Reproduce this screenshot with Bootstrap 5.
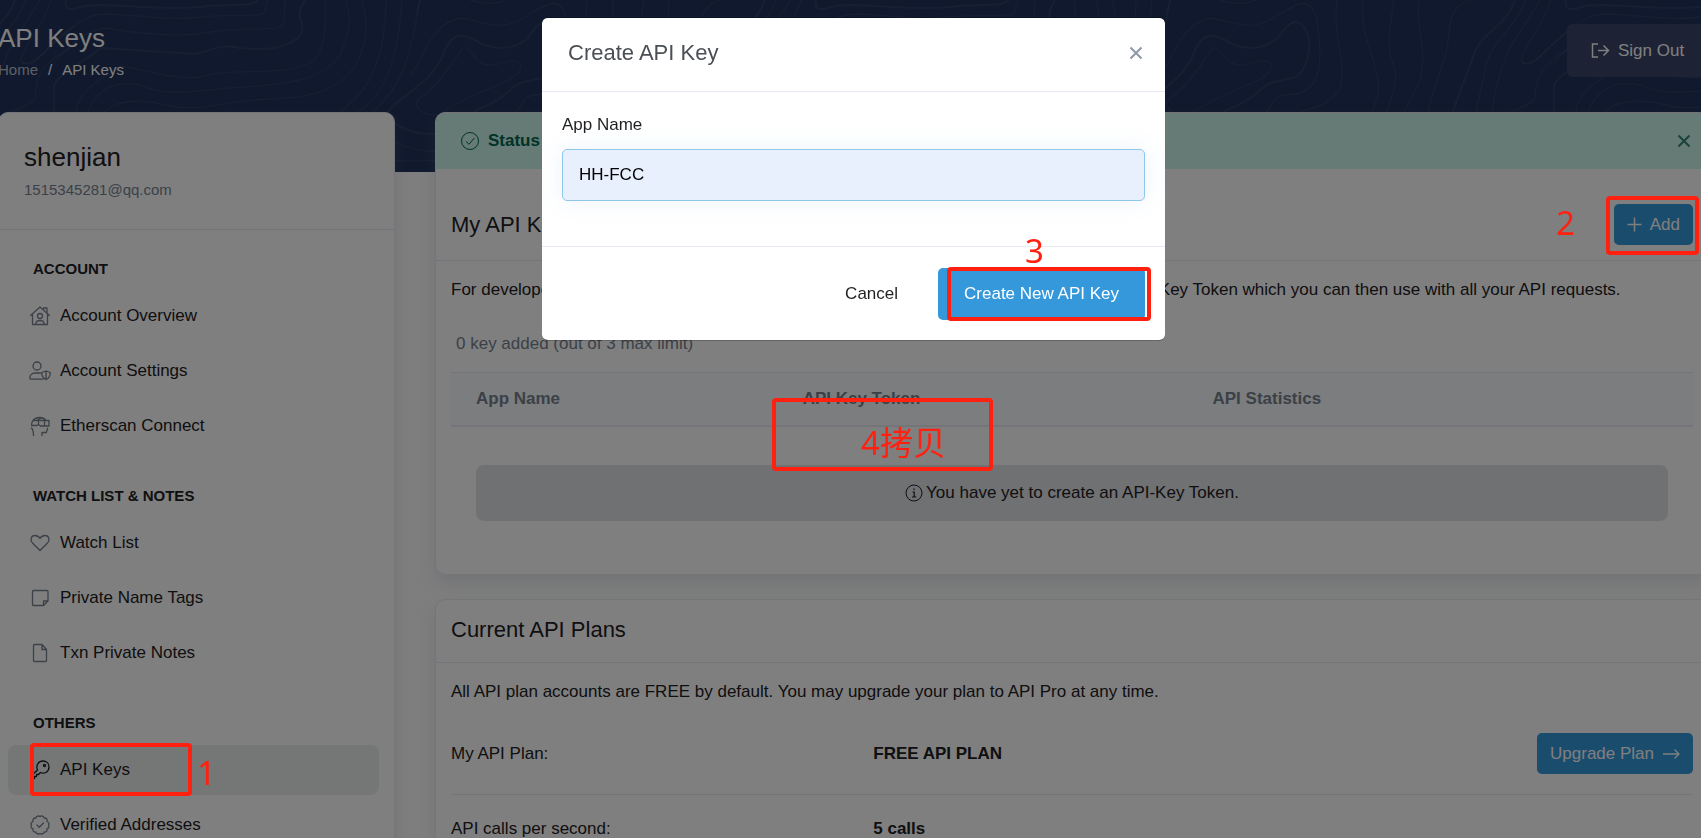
<!DOCTYPE html>
<html lang="en">
<head>
<meta charset="utf-8">
<meta name="viewport" content="width=device-width, initial-scale=1">
<title>API Keys</title>
<link href="https://cdn.jsdelivr.net/npm/bootstrap@5.3.0/dist/css/bootstrap.min.css" rel="stylesheet">
<style>
  :root { --line: #e7eaf3; --brand: #3498db; --ink: #1e2022; --muted: #77838f; --mark: #ff2010; }
  body { font-family: "Liberation Sans", Arial, sans-serif; font-size: 17px; line-height: 26px; color: var(--ink); background: #fcfcfd; }
  .btn { font-size: 17px; line-height: 26px; border-radius: 5px; }
  .btn-brand { background: var(--brand); color: #fff; border: 0; }
  .page-shell { margin: 0 -8px 0 -2px; }
  .hero { height: 172px; background: #21325b; }
  .topbar { padding: 24px 0 31px; }
  .topbar h1 { font-size: 26px; line-height: 28px; margin: 0 0 7px; color: #fff; font-weight: 400; }
  .crumbs { --bs-breadcrumb-item-padding-x: 10px; font-size: 15px; line-height: 22px; color: #fff; }
  .crumbs .breadcrumb-item, .crumbs .breadcrumb-item::before { color: #fff; }
  .crumbs a { color: rgba(255,255,255,.7); text-decoration: none; }
  .btn-signout { background: #3a4468; color: #fff; border: 0; width: 142px; height: 53px; padding: 0 23px; white-space: nowrap; }
  .panel { border: 1px solid var(--line); border-radius: 10px; background: #fff; box-shadow: 0 8px 16px rgba(140,152,164,.2); }
  .side { width: 397px; flex: none; }
  .side-head { padding: 28px 25px; border-bottom: 1px solid var(--line); }
  .side-head h2 { font-size: 26px; line-height: 32px; font-weight: 400; margin: 0 0 6px; }
  .side-head p { font-size: 15px; line-height: 22px; color: var(--muted); margin: 0; }
  .side-nav { padding: 29px 15px 40px 9px; }
  .side-nav h3 { font-size: 15px; line-height: 20px; font-weight: 700; margin: 0 0 12px 25px; text-transform: uppercase; }
  .side-nav ul { gap: 5px; margin-bottom: 35px; }
  .side-nav a { height: 50px; padding: 0 21px; gap: 9px; border-radius: 8px; color: var(--ink); text-decoration: none; }
  .side-nav a.active { background: #ebefee; }
  .side-nav svg { color: var(--muted); }
  .side-nav a.active svg { color: var(--ink); }
  .ico { width: 22px; height: 22px; flex: none; fill: none; stroke: currentColor; stroke-width: 1.3; stroke-linecap: round; stroke-linejoin: round; }
  .main-col { min-width: 0; margin-left: 40px; }
  .status-bar { height: 56px; padding: 0 16px 0 24px; background: #ccf4ed; color: #00694f; border-radius: 9px 9px 0 0; }
  .panel-title { font-size: 22px; line-height: 28px; font-weight: 400; margin: 0; }
  .panel-head { padding: 16px 15px 18px; border-bottom: 1px solid var(--line); }
  .panel-head-tall { padding: 35px 15px 15px; border-bottom: 1px solid var(--line); }
  .panel-body { padding: 16px 15px 15px; }
  .intro { margin-bottom: 28px; }
  .quota { color: var(--muted); padding-left: 5px; }
  .btn-slim { height: 41px; padding: 0 13px; }
  .keys { margin: 15px 0 0; color: var(--ink); }
  .keys th { background: #f8fafd; color: var(--muted); padding: 13px 25px; border-top: 1px solid var(--line); border-bottom: 2px solid var(--line); }
  .keys td { padding: 38px 25px; border: 0; }
  .keys th:nth-child(1) { width: 26.3%; }
  .keys th:nth-child(2) { width: 33%; }
  .empty-note { height: 56px; gap: 3px; background: #dfe2e5; border-radius: 8px; }
  .plan-row { padding-bottom: 20px; margin-bottom: 21px; border-bottom: 1px solid var(--line); }
  .plan-label { width: 34%; }
  .key-modal { z-index: 30; left: -2px; right: -8px; width: auto; overflow: hidden; }
  .key-modal .modal-dialog { max-width: 623px; margin: 17px auto; }
  .key-modal .modal-content { border: 1px solid rgba(0,0,0,.2); border-width: 1px 0; border-radius: 6px; color: var(--ink); background-clip: padding-box; }
  .key-modal .modal-header { padding: 0 21px 3px 26px; height: 74px; border-bottom: 1px solid var(--line); }
  .key-modal .modal-title { font-size: 22px; line-height: 28px; font-weight: 400; color: #4a4f55; }
  .key-modal .modal-body { padding: 20px 20px 45px; }
  .key-modal label { margin-bottom: 11px; }
  .key-modal .form-control { height: 52px; font-size: 17px; padding: 0 16px; border: 1px solid #8ec7ea; border-radius: 5px; background: #e8f0fe; color: #000; box-shadow: 0 0 25px rgba(52,152,219,.1); }
  .key-modal .modal-footer { padding: 21px 20px 20px; border-top: 1px solid var(--line); }
  .key-modal .modal-footer .btn { height: 52px; margin: 0; padding: 0 26px; }
  .key-modal .modal-footer .btn-cancel { margin-right: 14px; border: 0; color: var(--ink); }
  .x-btn { border: 0; background: none; padding: 0; width: 16px; height: 16px; display: flex; color: #8c98a4; }
  .x-btn svg { width: 16px; height: 16px; fill: none; stroke: currentColor; stroke-width: 2; }
  .status-bar .x-btn { color: #2f8673; }
  .shade { position: fixed; inset: 0; background: rgba(0,0,0,.5); z-index: 20; }
  /* hand-drawn marks lying over the page */
  .marks { position: absolute; inset: 0; z-index: 40; pointer-events: none; overflow: hidden; }
  .marks div { position: absolute; border: 4px solid var(--mark); border-radius: 4px; }
  .marks span { position: absolute; color: var(--mark); font: 33px/40px "Noto Sans", "Noto Sans CJK SC", sans-serif; white-space: nowrap; }
</style>
</head>
<body class="overflow-hidden vh-100 position-relative">

<svg class="hero position-absolute top-0 start-0 w-100" aria-hidden="true">
  <defs>
    <g id="contours" fill="none" stroke="#fff" stroke-opacity=".06" stroke-width="1.3">
      <g stroke-width="2.2">
        <path d="M66 0C64 12 72 10 85 6C110 2 150 11 200 7C230 3 252 8 258 0"/>
        <path d="M54 112V85C60 72 85 62 100 48C130 50 160 52 195 54C215 50 220 43 240 48C270 52 305 45 302 25C297 10 300 10 305 0"/>
        <path d="M388 112C400 95 430 85 443 55C450 35 460 30 480 43C500 52 520 48 530 35C540 20 550 15 558 35C562 50 556 72 545 77C530 82 520 80 510 90C495 105 484 105 474 112"/>
        <path d="M765 0C755 30 730 30 722 60C715 80 708 95 703 112"/>
        <path d="M395 124C410 132 420 135 437 134"/>
      </g>
      <path d="M22 63C35 66 45 50 60 38C80 22 85 14 110 14C150 16 170 21 200 17C230 14 262 17 264 13L268 0"/>
      <path d="M52 65C70 45 85 30 105 28C140 34 180 38 210 32C250 25 283 35 284 20L285 0"/>
      <path d="M76 112C76 95 95 82 120 66C150 70 170 80 200 77C240 65 280 80 315 60C328 40 325 20 325 0"/>
      <path d="M88 112C95 90 115 80 140 85C170 98 200 90 230 88C270 85 320 85 340 55C352 30 350 15 346 0"/>
      <path d="M105 112C115 100 140 98 170 106C200 112 230 100 270 99C310 98 345 90 358 60C370 35 366 15 362 0"/>
      <path d="M340 112C370 90 385 60 386 0M358 112C385 95 398 60 402 0M372 112C400 90 410 60 420 0"/>
      <path d="M443 112C460 100 480 93 500 84C515 78 524 70 520 63C510 57 500 66 490 65C472 64 470 42 462 49C450 66 440 84 420 98C410 106 425 118 437 114"/>
      <path d="M410 75C425 58 430 22 462 18C490 24 500 30 520 20C545 5 560 -8 567 20C573 60 572 90 545 94C520 95 527 100 516 112"/>
      <path d="M470 0C485 4 495 5 506 0M420 0L416 15"/>
      <path d="M587 0C582 40 598 60 590 88C582 105 560 108 550 112M613 0C610 30 622 50 628 80C630 95 625 105 622 112"/>
      <path d="M644 0C640 30 635 45 645 70C648 85 640 100 636 112M669 0C665 30 680 55 668 85L654 112"/>
      <path d="M720 0C690 10 705 40 692 65C685 90 680 100 678 112"/>
      <path d="M776 0C765 30 740 40 735 70L726 112M790 0C770 35 750 50 742 112"/>
      <path d="M801 0C790 35 768 50 772 62C785 72 795 45 825 25"/>
      <path d="M785 99C780 105 770 108 760 112M785 98C786 75 790 65 825 45"/>
      <path d="M395 142C410 150 420 150 437 152M395 160C410 162 420 161 437 160"/>
    </g>
  </defs>
  <use href="#contours" x="-750"/><use href="#contours"/><use href="#contours" x="750"/><use href="#contours" x="1500"/><use href="#contours" x="2250"/>
</svg>

<div class="page-shell position-relative">
  <header class="topbar d-flex justify-content-between align-items-start">
    <div>
      <h1>API Keys</h1>
      <nav aria-label="breadcrumb"><ol class="breadcrumb crumbs mb-0">
        <li class="breadcrumb-item"><a href="#">Home</a></li>
        <li class="breadcrumb-item active">API Keys</li>
      </ol></nav>
    </div>
    <a class="btn btn-signout d-flex align-items-center gap-2" href="#">
      <svg width="20" height="20" viewBox="0 0 20 20" fill="none" stroke="currentColor" stroke-width="1.5"><path d="M8 3H2.500V16H8M8 9.500H18.500M13.500 4.500L18.500 9.500L13.500 14.500"/></svg>
      Sign Out
    </a>
  </header>

  <div class="d-flex align-items-start">
    <aside class="panel side">
      <div class="side-head">
        <h2>shenjian</h2>
        <p>1515345281@qq.com</p>
      </div>
      <nav class="side-nav" aria-label="Account menu">
        <h3>Account</h3>
        <ul class="list-unstyled d-flex flex-column">
          <li><a class="d-flex align-items-center" href="#"><svg class="ico" viewBox="0 0 22 22"><path d="M1.500 10.500L11 2L20.500 10.500M3.500 9V19.500H18.500V9M14.500 4V3H18V7.500M7 19.500V18.500C7 16.500 8.500 15.500 11 15.500S15 16.500 15 18.500V19.500"/><circle cx="11" cy="11" r="2.500"/></svg>Account Overview</a></li>
          <li><a class="d-flex align-items-center" href="#"><svg class="ico" viewBox="0 0 22 22"><circle cx="8" cy="6" r="4"/><path d="M11.500 13H6C3 13 .8 15 .8 18C.8 18.800 1.200 19.200 2 19.200H14M17 11L21.300 12.500C21.300 16 20 18.300 17 19.500C14 18.300 12.700 16 12.700 12.500ZM17 11V19.500"/></svg>Account Settings</a></li>
          <li><a class="d-flex align-items-center" href="#"><svg class="ico" viewBox="0 0 22 22"><path d="M4 5.500H20V11H11.500L9.500 9.500L8 10.500H2.500C2.500 8.500 2.700 7 4 5.500ZM4 5.500C6.500 2 13.500 1 17 5.500M9.500 5.500V9.500M15.500 5.500V11M8 5L12.500 3M2.500 13C4.500 15 4.500 18 4.500 20.500M18.500 13.500C18.300 15.500 17.500 16 17.500 17.500H13V20.500"/></svg>Etherscan Connect</a></li>
        </ul>
        <h3>Watch List &amp; Notes</h3>
        <ul class="list-unstyled d-flex flex-column">
          <li><a class="d-flex align-items-center" href="#"><svg class="ico" viewBox="0 0 22 22"><path d="M11 18.500L3.500 11C.8 8.200 2 3.500 6 3.500C8.500 3.500 10 5 11 6.500C12 5 13.500 3.500 16 3.500C20 3.500 21.200 8.200 18.500 11Z"/></svg>Watch List</a></li>
          <li><a class="d-flex align-items-center" href="#"><svg class="ico" viewBox="0 0 22 22"><path d="M4.500 3.500H18C18.700 3.500 19 3.800 19 4.500V14L14.500 18.500H4.500C3.500 18.500 3.500 18.500 3.500 17.500V4.500C3.500 3.500 3.500 3.500 4.500 3.500ZM14.500 18.500V14H19"/></svg>Private Name Tags</a></li>
          <li><a class="d-flex align-items-center" href="#"><svg class="ico" viewBox="0 0 22 22"><path d="M5.500 2.500H13L17.500 7.500V18.500C17.500 19.500 17.500 19.500 16.500 19.500H5.500C4.500 19.500 4.500 19.500 4.500 18.500V3.500C4.500 2.500 4.500 2.500 5.500 2.500ZM13 2.500V7.500H17.500"/></svg>Txn Private Notes</a></li>
        </ul>
        <h3>Others</h3>
        <ul class="list-unstyled d-flex flex-column">
          <li><a class="d-flex align-items-center active" href="#"><svg class="ico" viewBox="0 0 22 22"><path d="M8.500 11C6.500 6.500 9.500 2 14 2C17.500 2 20 4.500 20 8C20 12.500 15.500 15.500 11.500 13.500L9.500 15.500H7.500V17.500H5.500V19.500H2V17L8.500 11"/><circle cx="15.500" cy="6.500" r="1"/></svg>API Keys</a></li>
          <li><a class="d-flex align-items-center" href="#"><svg class="ico" viewBox="0 0 22 22"><path d="M11 2.500C12.500 1.500 14.500 2 15.200 4C17.500 3.800 18.700 5.500 18 7.500C20 8.500 20.500 9.500 19.500 11C20.500 12.500 20 14 18 14.700C18.500 17 17.300 18.300 15.200 18C14.500 20 12.500 20.500 11 19.500C9.500 20.500 7.500 20 6.800 18C4.700 18.300 3.500 17 4 14.700C2 14 1.500 12.500 2.500 11C1.500 9.500 2 8.500 4 7.500C3.300 5.500 4.500 3.800 6.800 4C7.500 2 9.500 1.500 11 2.500ZM8 11L10.300 13.300L14.500 9"/></svg>Verified Addresses</a></li>
        </ul>
      </nav>
    </aside>

    <main class="flex-grow-1 main-col">
      <section class="panel">
        <div class="status-bar d-flex align-items-center justify-content-between">
          <div class="d-flex align-items-center gap-2"><svg width="20" height="20" viewBox="0 0 20 20" fill="none" stroke="currentColor"><circle cx="10" cy="10" r="8.500"/><path d="M6 10.500L9 13.300L14.300 7"/></svg><strong>Status</strong></div>
          <button class="x-btn" type="button" aria-label="Dismiss"><svg viewBox="0 0 16 16"><path d="M2.500 2.500L13.500 13.500M13.500 2.500L2.500 13.500"/></svg></button>
        </div>
        <div class="panel-head-tall d-flex align-items-center justify-content-between">
          <h2 class="panel-title">My API Keys</h2>
          <button class="btn btn-brand btn-slim d-flex align-items-center gap-2" type="button"><svg width="15" height="15" viewBox="0 0 15 15" stroke="currentColor" stroke-width="1.500"><path d="M7.500 .5V14.500M.5 7.500H14.500"/></svg>Add</button>
        </div>
        <div class="panel-body">
          <p class="intro">For developers interested in building applications using our API Service, please create an API-Key Token which you can then use with all your API requests.</p>
          <p class="quota mb-0">0 key added (out of 3 max limit)</p>
          <table class="table keys">
            <thead><tr><th scope="col">App Name</th><th scope="col">API Key Token</th><th scope="col">API Statistics</th></tr></thead>
            <tbody><tr><td colspan="3"><div class="empty-note d-flex align-items-center justify-content-center"><svg width="18" height="18" viewBox="0 0 18 18" fill="none" stroke="currentColor"><circle cx="9" cy="9" r="8"/><path d="M7.500 8H9.200V13M7 13H11.300M9 4.500V6" stroke-width="1.200"/></svg>You have yet to create an API-Key Token.</div></td></tr></tbody>
          </table>
        </div>
      </section>

      <section class="panel mt-4">
        <div class="panel-head"><h2 class="panel-title">Current API Plans</h2></div>
        <div class="panel-body">
          <p class="intro">All API plan accounts are FREE by default. You may upgrade your plan to API Pro at any time.</p>
          <div class="plan-row d-flex align-items-center">
            <div class="plan-label">My API Plan:</div>
            <strong class="flex-grow-1 text-uppercase">Free API Plan</strong>
            <a class="btn btn-brand btn-slim d-flex align-items-center" href="#">Upgrade Plan<svg class="ms-2" width="18" height="12" viewBox="0 0 18 12" fill="none" stroke="currentColor" stroke-width="1.300"><path d="M1 6H17M12.500 1.500L17 6L12.500 10.500"/></svg></a>
          </div>
          <div class="d-flex">
            <div class="plan-label">API calls per second:</div>
            <strong>5 calls</strong>
          </div>
        </div>
      </section>
    </main>
  </div>
</div>

<div class="shade"></div>

<div class="modal d-block position-absolute key-modal" role="dialog" aria-labelledby="key-title">
  <div class="modal-dialog">
    <form class="modal-content">
      <div class="modal-header justify-content-between">
        <h2 class="modal-title" id="key-title">Create API Key</h2>
        <button class="x-btn" type="button" aria-label="Close"><svg viewBox="0 0 16 16"><path d="M2.500 2.500L13.500 13.500M13.500 2.500L2.500 13.500"/></svg></button>
      </div>
      <div class="modal-body">
        <label class="d-block" for="app-name">App Name</label>
        <input class="form-control" id="app-name" type="text" value="HH-FCC">
      </div>
      <div class="modal-footer">
        <button class="btn btn-cancel" type="button">Cancel</button>
        <button class="btn btn-brand" type="submit">Create New API Key</button>
      </div>
    </form>
  </div>
</div>

<div class="marks">
  <div style="left:30px;top:743px;width:162px;height:53px"></div><span style="left:197px;top:753px">1</span>
  <div style="left:1606px;top:196px;width:93px;height:59px"></div><span style="left:1556px;top:203px">2</span>
  <div style="left:947px;top:267px;width:204px;height:54px"></div><span style="left:1025px;top:231px">3</span>
  <div style="left:772px;top:398px;width:221px;height:73px"></div><span style="left:861px;top:423px">4拷贝</span>
</div>

<script src="https://cdn.jsdelivr.net/npm/bootstrap@5.3.0/dist/js/bootstrap.bundle.min.js"></script>
</body>
</html>
